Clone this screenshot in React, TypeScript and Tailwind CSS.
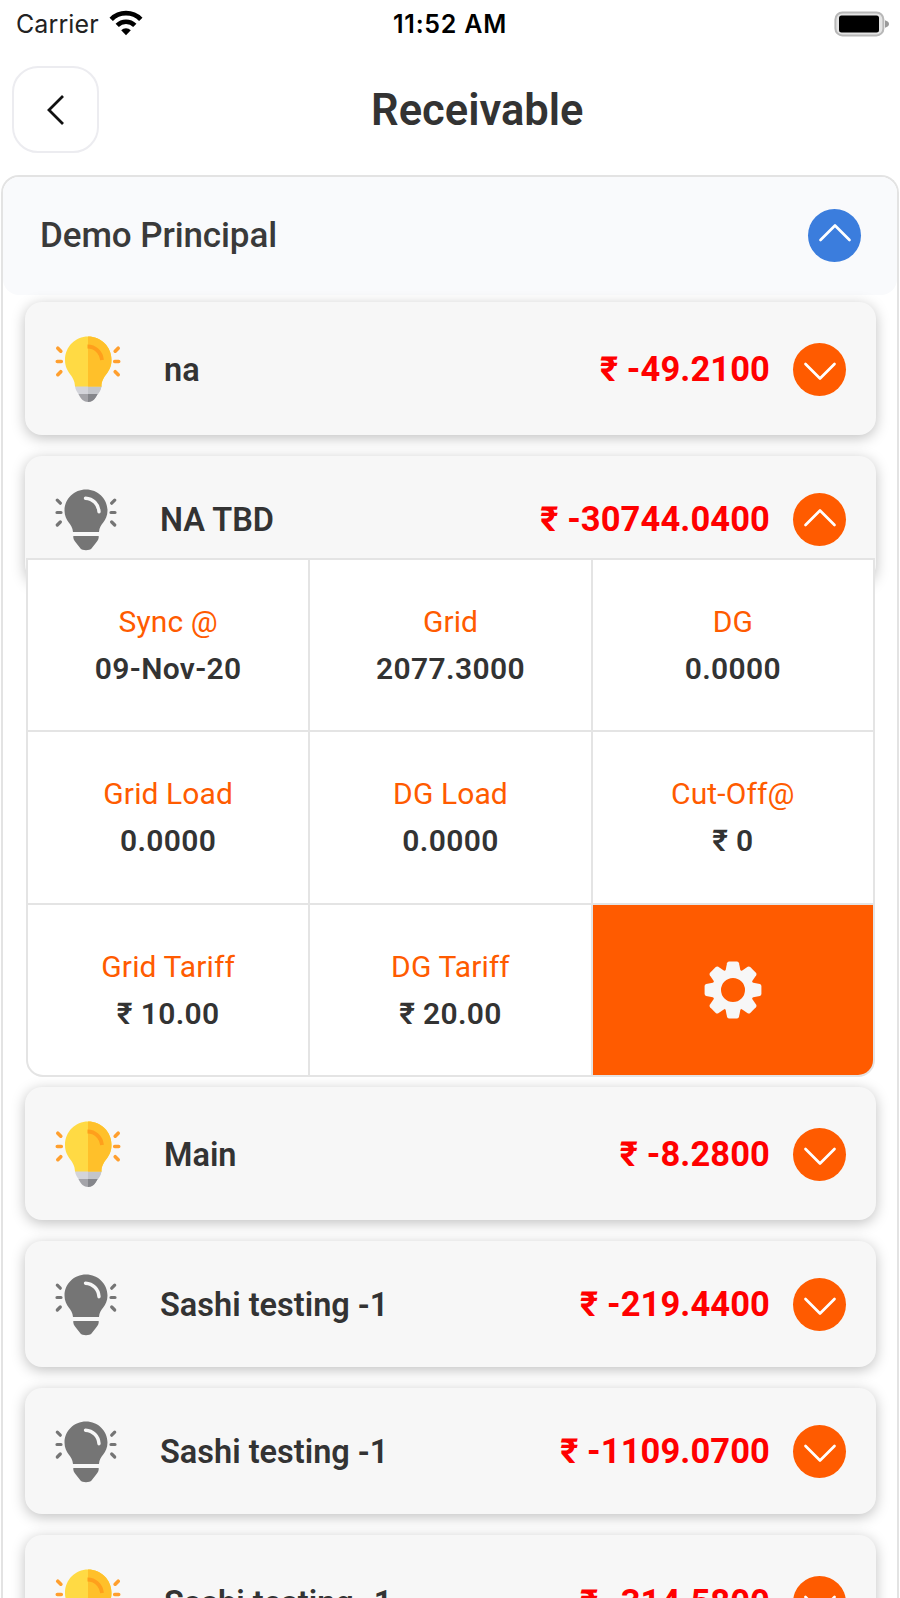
import { clsx } from 'clsx';

type Meter = {
  name: string;
  amount: string;
  lit: boolean;
  open?: boolean;
};

const meters: Meter[] = [
  { name: 'na', amount: '-49.2100', lit: true },
  { name: 'NA TBD', amount: '-30744.0400', lit: false, open: true },
  { name: 'Main', amount: '-8.2800', lit: true },
  { name: 'Sashi testing -1', amount: '-219.4400', lit: false },
  { name: 'Sashi testing -1', amount: '-1109.0700', lit: false },
  { name: 'Sashi testing -1', amount: '-314.5800', lit: true },
];

const details = [
  { label: 'Sync @', value: '09-Nov-20' },
  { label: 'Grid', value: '2077.3000' },
  { label: 'DG', value: '0.0000' },
  { label: 'Grid Load', value: '0.0000' },
  { label: 'DG Load', value: '0.0000' },
  { label: 'Cut-Off@', value: '₹ 0' },
  { label: 'Grid Tariff', value: '₹ 10.00' },
  { label: 'DG Tariff', value: '₹ 20.00' },
];

const WifiIcon = () => (
  <svg className="ml-[10px] mb-[4px] h-[26px] w-[34px]" viewBox="0 0 34 26">
    <path d="M17 25.2 12.2 20.3a6.8 6.8 0 0 1 9.6 0Z" />
    <path d="M8.2 15.4a12.4 12.4 0 0 1 17.6 0" fill="none" stroke="#000" strokeWidth="4.6" />
    <path d="M2.2 9.4a20.8 20.8 0 0 1 29.6 0" fill="none" stroke="#000" strokeWidth="4.8" />
  </svg>
);

const BatteryIcon = () => (
  <svg className="mb-[3px] h-[26px] w-[55px]" viewBox="0 0 55 26">
    <rect x="1.4" y="1.4" width="48" height="23" rx="7" fill="#e4e4e4" stroke="#b8b8b8" strokeWidth="2" />
    <rect x="5" y="4.5" width="40" height="17" rx="2.5" />
    <path d="M51 9.3c2.6.8 4 2 4 3.7s-1.4 2.9-4 3.7z" fill="#9a9a9a" />
  </svg>
);

const LitBulb = () => (
  <svg className="h-[67px] w-[66px]" viewBox="-1 0 66 67">
    <g stroke="#ff9f2e" strokeWidth="3.6" strokeLinecap="round">
      <path d="m1.8 12.2 3 3M1.3 25.5h4M1.8 38.7l3-3M62.2 12.2l-3 3M62.7 25.5h-4M62.2 38.7l-3-3" />
    </g>
    <path d="M19 50h26.5c-.5 4-2 6-4 8.5H23C21 56 19.5 54 19 50z" fill="#d3d4da" />
    <path d="M32 50h13.5c-.5 4-2 6-4 8.5H32z" fill="#c3c5ca" />
    <path d="M22.5 58h19c-2 5-5.5 8-9.5 8s-7.500-3-9.500-8z" fill="#a4a4a9" />
    <path d="M32 58h9.500c-2 5-5.500 8-9.500 8z" fill="#85868b" />
    <path d="M32 .5C19.500.5 9 10.500 9 24c0 13.500 10 15 10 26.500h26.500C45.500 39 55.500 37.500 55.500 24 55.500 10.500 45 .5 32 .5z" fill="#ffda44" />
    <path d="M32 .5v50h13.500C45.500 39 55.500 37.500 55.500 24 55.500 10.500 45 .5 32 .5z" fill="#ffc02a" />
    <path d="M31.500 10.500c7.500 0 13.500 5.500 14.500 13.500" fill="none" stroke="#ff9f1c" strokeWidth="3.800" />
  </svg>
);

const DimBulb = () => (
  <svg className="h-[62px] w-[62px]" viewBox="-.5 0 62 62">
    <g stroke="#757575" strokeWidth="3.200" strokeLinecap="round">
      <path d="m1.800 11.200 3 3M1.500 23.500h4M1.800 36l3-3M59.200 11.200l-3 3M59.500 23.500h-4M59.200 36l-3-3" />
    </g>
    <path d="M30.500.5C18.500.5 9 10 9 21.500c0 11 8 13 8.500 21.500h26C44 34.500 52 32.500 52 21.500 52 10 42.500.5 30.500.5z" fill="#757575" />
    <path d="M17.800 47h25.400c.3 2.500-.7 4.500-2.700 6.700L36 59.500c-1.500 2.200-9.500 2.200-11 0l-4.500-5.800c-2-2.200-3-4.200-2.700-6.700z" fill="#757575" />
    <path d="M30 9.200c7.500.5 13 6 13.500 13.500" fill="none" stroke="#f7f7f7" strokeWidth="3.400" strokeLinecap="round" />
  </svg>
);

const Toggle = ({ open, className }: { open?: boolean; className: string }) => (
  <button className={clsx('flex h-[53px] w-[53px] items-center justify-center rounded-full', className)}>
    <svg className={clsx('h-[20px] w-[34px]', open ? 'mb-[4px] rotate-180' : 'mt-[3px]')} viewBox="0 0 34 20" fill="none">
      <path d="M2.500 3 17 17.500 31.500 3" stroke="#fff" strokeWidth="2.700" strokeLinecap="round" strokeLinejoin="round" />
    </svg>
  </button>
);

const GearIcon = () => (
  <svg className="h-[58px] w-[58px]" viewBox="-29 -29 58 58" fill="#f7f7f7">
    <circle r="16.500" fill="none" stroke="#f7f7f7" strokeWidth="9" />
    {[0, 45, 90, 135, 180, 225, 270, 315].map((angle) => (
      <path
        key={angle}
        d="M-7.500-19-6-26.800q.4-1.600 2-1.600h8q1.600 0 2 1.600L7.500-19z"
        transform={`rotate(${angle})`}
      />
    ))}
  </svg>
);

const DetailGrid = () => (
  <div className="relative mx-[1px] -mt-[24px] mb-[10px] h-[519px] overflow-hidden rounded-b-[17px] border-2 border-[#e4e4e4] bg-[#e4e4e4]">
    <div className="grid h-full grid-cols-3 grid-rows-3 gap-[2px]">
      {details.map(({ label, value }) => (
        <div key={label} className="flex flex-col items-center bg-white pt-[38px]">
          <span className="text-[30px] leading-[47px] tracking-[0.1px] text-[#ff5b00]">{label}</span>
          <span className="text-[30px] font-semibold leading-[47px] tracking-[0.35px] text-[#333]">{value}</span>
        </div>
      ))}
      <button className="-mr-[1px] -mb-[1px] flex items-center justify-center rounded-br-[15px] bg-[#ff5b00]">
        <GearIcon />
      </button>
    </div>
  </div>
);

const MeterCard = ({ name, amount, lit, open }: Meter) => (
  <>
    <div
      className={clsx(
        'flex items-center rounded-[17px] bg-[#f7f7f7] pr-[30px] pl-[30px] shadow-[0_3px_14px_rgba(0,0,0,0.25)]',
        lit ? 'h-[133px] pt-[2px]' : 'h-[126px] pt-[1px]',
        !open && 'mb-[21px]',
      )}
    >
      {lit ? <LitBulb /> : <DimBulb />}
      <span className="ml-[43px] flex-1 pt-[1px] text-[32.5px] font-semibold text-[#333]">{name}</span>
      <span className="mr-[23px] pt-[1px] text-[34.5px] font-bold tracking-[0.1px] text-[#ff0000]">₹ {amount}</span>
      <Toggle open={open} className="bg-[#ff5b00]" />
    </div>
    {open && <DetailGrid />}
  </>
);

const App = () => {
  return (
    <div className="flex h-[1598px] w-[900px] flex-col overflow-hidden bg-white font-['Roboto',sans-serif]">
      <div className="grid h-[48px] shrink-0 grid-cols-3 items-center px-[11px] pt-[2px] font-['Inter',sans-serif] text-[25px]">
        <div className="flex items-center pl-[5px] tracking-[0.1px] text-[#222]">
          Carrier
          <WifiIcon />
        </div>
        <div className="text-center font-semibold tracking-[0.75px] text-black">11:52 AM</div>
        <div className="flex justify-end">
          <BatteryIcon />
        </div>
      </div>

      <header className="flex h-[127px] shrink-0 items-start px-[12px] pt-[18px]">
        <button className="flex h-[87px] w-[87px] items-center justify-center rounded-[26px] border-2 border-[#ececf0]">
          <svg className="h-[32px] w-[20px]" viewBox="0 0 20 32" fill="none">
            <path d="M17 2 3 16l14 14" stroke="#111" strokeWidth="2.8" />
          </svg>
        </button>
        <h1 className="ml-[272px] text-[43.5px] font-semibold leading-[89px] text-[#333]">Receivable</h1>
      </header>

      <main className="mx-[1px] flex-1 rounded-t-[18px] border-2 border-b-0 border-[#e3e3e3]">
        <div className="flex h-[118px] items-center justify-between rounded-[16px] bg-[#f9fafc] pr-[36px] pb-[2px] pl-[37px]">
          <h2 className="pt-[2px] text-[35px] font-medium tracking-[-0.1px] text-[#3a3a3a]">Demo Principal</h2>
          <Toggle open className="bg-[#3b7ddd]" />
        </div>
        <div className="pt-[7px] pr-[21px] pl-[22px]">
          {meters.map((meter, i) => (
            <MeterCard key={i} {...meter} />
          ))}
        </div>
      </main>
    </div>
  );
};

export default App;
